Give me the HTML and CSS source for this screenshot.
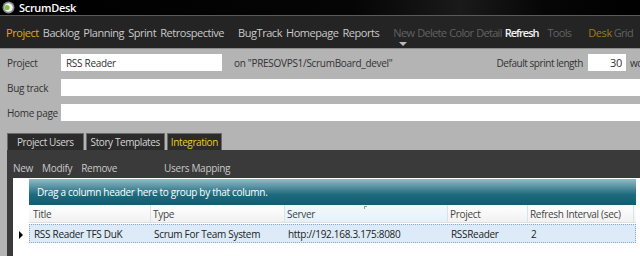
FILE: index.html
```html
<!DOCTYPE html>
<html lang="en">
  <head>
    <meta charset="UTF-8" />
    <title>ScrumDesk</title>
    <link rel="stylesheet" href="styles.css">
  </head>
  <body>
    <div class="titlebar">
      <svg class="logo" width="13" height="13" viewBox="0 0 13 13">
        <circle cx="6.5" cy="6.5" r="6" fill="#8a8a8a" />
        <circle cx="6.5" cy="6.5" r="4.3" fill="#f2f2f2" />
        <circle cx="5" cy="6.5" r="2.6" fill="#7dc242" />
      </svg>
      <span>ScrumDesk</span>
    </div>

    <div class="menubar">
      <span class="menu active">Project</span>
      <span class="menu">Backlog</span>
      <span class="menu">Planning</span>
      <span class="menu">Sprint</span>
      <span class="menu">Retrospective</span>
      <span class="menu gap">BugTrack</span>
      <span class="menu">Homepage</span>
      <span class="menu">Reports</span>
      <span class="menu gap dim new">New</span>
      <span class="menu dim">Delete</span>
      <span class="menu dim">Color</span>
      <span class="menu dim">Detail</span>
      <span class="menu bold">Refresh</span>
      <span class="menu tools dim">Tools</span>
      <span class="menu desk">Desk</span>
      <span class="menu dim">Grid</span>
    </div>

    <div class="form">
      <div class="row">
        <label class="label">Project</label>
        <input class="field short" type="text" value="RSS Reader" readonly />
        <span class="note">on "PRESOVPS1/ScrumBoard_devel"</span>
        <span class="note sprint">Default sprint length</span>
        <input class="field num" type="text" value="30" readonly />
        <span class="note wo">wo</span>
      </div>
      <div class="row">
        <label class="label">Bug track</label>
        <input class="field long" type="text" readonly />
      </div>
      <div class="row">
        <label class="label">Home page</label>
        <input class="field long" type="text" readonly />
      </div>
    </div>

    <div class="tabs">
      <span class="tab first">Project Users</span>
      <span class="tab">Story Templates</span>
      <span class="tab selected">Integration</span>
    </div>

    <div class="panel">
      <div class="toolbar">
        <span>New</span>
        <span>Modify</span>
        <span>Remove</span>
        <span class="mapping">Users Mapping</span>
      </div>
      <div class="grid">
        <div class="side">
          <div class="side-head"></div>
          <div class="side-row"><span class="arrow"></span></div>
        </div>
        <div class="main">
          <div class="group">Drag a column header here to group by that column.</div>
          <div class="cols head">
            <span class="c1">Title</span>
            <span class="c2">Type</span>
            <span class="c3 sorted">Server<i class="sort"></i></span>
            <span class="c4">Project</span>
            <span class="c5">Refresh Interval (sec)</span>
          </div>
          <div class="cols item">
            <span class="c1">RSS Reader TFS DuK</span>
            <span class="c2">Scrum For Team System</span>
            <span class="c3">http://192.168.3.175:8080</span>
            <span class="c4">RSSReader</span>
            <span class="c5">2</span>
          </div>
        </div>
      </div>
    </div>
  </body>
</html>
```

FILE: styles.css
```css
/* base */
* {
  box-sizing: border-box;
  margin: 0;
  padding: 0;
}

body {
  width: 640px;
  height: 256px;
  overflow: hidden;
  background: #b4b4b4;
  font-family: "Open Sans", "Liberation Sans", sans-serif;
  font-size: 10px;
  letter-spacing: -0.3px;
}

/* window title */
.titlebar {
  height: 16px;
  display: flex;
  align-items: center;
  gap: 4px;
  padding-left: 2px;
  background: linear-gradient(90deg, #000 0%, #050505 55%, #1a1a1a 72%, #060606 85%, #000 100%);
  border-bottom: 1px solid #5a5a5a;
  color: #fff;
  font-size: 11px;
  font-weight: 600;
}

.logo {
  flex: none;
}

/* main menu */
.menubar {
  height: 33px;
  display: flex;
  align-items: center;
  padding-left: 6px;
  background: #242424;
  border-bottom: 1px solid #8c8c8c;
  font-size: 11px;
  letter-spacing: -0.45px;
  white-space: nowrap;
}

.menu {
  color: #c9c9c9;
  margin-right: 4px;
  position: relative;
}

.menu.active {
  color: #e8a317;
}

.menu.gap {
  margin-left: 10px;
}

.menu.dim {
  color: #626262;
  letter-spacing: -0.7px;
  margin-right: 3px;
}

.menu.bold {
  color: #f2f2f2;
  font-weight: 600;
  letter-spacing: -1px;
}

.menu.tools {
  margin-left: 5px;
}

.menu.desk {
  color: #a07a1c;
  margin-left: 14px;
  margin-right: 2px;
}

.menu.new::after {
  content: "";
  position: absolute;
  left: 6px;
  top: 17px;
  border-left: 4px solid transparent;
  border-right: 4px solid transparent;
  border-top: 4px solid #bbb;
}

/* project form */
.form {
  padding: 1px 0 0 7px;
  color: #333;
}

.row {
  display: flex;
  align-items: center;
  height: 25px;
  white-space: nowrap;
}

.label {
  width: 54px;
  flex: none;
}

.field {
  flex: none;
  height: 17px;
  border: 0;
  background: #fff;
  font-family: inherit;
  font-size: 10px;
  letter-spacing: -0.3px;
  color: #333;
  padding: 0 5px;
  outline: none;
}

.short {
  width: 161px;
}

.long {
  width: 600px;
}

.num {
  width: 38px;
  text-align: right;
  padding-right: 4px;
  font-size: 11px;
}

.note {
  margin-left: 12px;
  flex: none;
}

.sprint {
  margin-left: 104px;
  margin-right: 5px;
  letter-spacing: -0.45px;
}

.wo {
  margin-left: 4px;
}

/* tabs */
.tabs {
  display: flex;
  gap: 2px;
  padding: 8px 0 0 7px;
  letter-spacing: -0.4px;
}

.tab {
  background: #2b2b2b;
  border: 1px solid #6a6a6a;
  border-bottom: 0;
  color: #d4d4d4;
  padding: 1px 4px 0;
  height: 17px;
}

.tab.first {
  padding: 1px 9px 0;
}

.tab.selected {
  color: #e6cf1a;
  padding: 1px 3px 0;
}

/* integration panel */
.panel {
  margin-left: 7px;
  background: #3a3a3a;
  height: 106px;
  padding: 7px 0 0 6px;
}

.toolbar {
  display: flex;
  align-items: center;
  gap: 9px;
  color: #c8c8c8;
  height: 21px;
}

.mapping {
  margin-left: 38px;
}

/* grid */
.grid {
  display: flex;
  background: #fff;
  height: 78px;
  padding-top: 1px;
}

.side {
  width: 16px;
  flex: none;
}

.side-head {
  height: 46px;
}

.side-row {
  height: 19px;
  display: flex;
  align-items: center;
  justify-content: center;
}

.arrow {
  border-top: 4px solid transparent;
  border-bottom: 4px solid transparent;
  border-left: 4px solid #000;
}

.main {
  width: 607px;
}

.group {
  height: 26px;
  padding: 6px 8px;
  color: #fff;
  background: linear-gradient(#8fbcc6 0%, #4f8c9c 35%, #1e6a7d 60%, #135c71 100%);
}

.cols {
  display: flex;
  white-space: nowrap;
}

.cols span {
  flex: none;
  padding-left: 2px;
}

.cols .c1 {
  padding-left: 4px;
}

.head {
  height: 18px;
  align-items: center;
  color: #444;
  background: linear-gradient(#fff, #f1f1f1);
  border-bottom: 1px solid #e0e0e0;
  margin-bottom: 1px;
}

.head span {
  height: 100%;
  display: flex;
  align-items: center;
  border-right: 1px solid #d6e4ec;
}

.head .sorted {
  background: linear-gradient(#f3f9fd, #e4f1fa);
  position: relative;
}

.sort {
  position: absolute;
  left: 79px;
  top: 1px;
  width: 3px;
  height: 3px;
  border-top: 1px solid #999;
  border-left: 1px solid #999;
}

.item {
  height: 19px;
  align-items: center;
  color: #222;
  background: #dcebf7;
  border: 1px dotted #8aa6c4;
}

.c1 {
  width: 122px;
}

.c2 {
  width: 134px;
}

.c3 {
  width: 163px;
}

.c4 {
  width: 80px;
}

.c5 {
  width: 106px;
}
```
